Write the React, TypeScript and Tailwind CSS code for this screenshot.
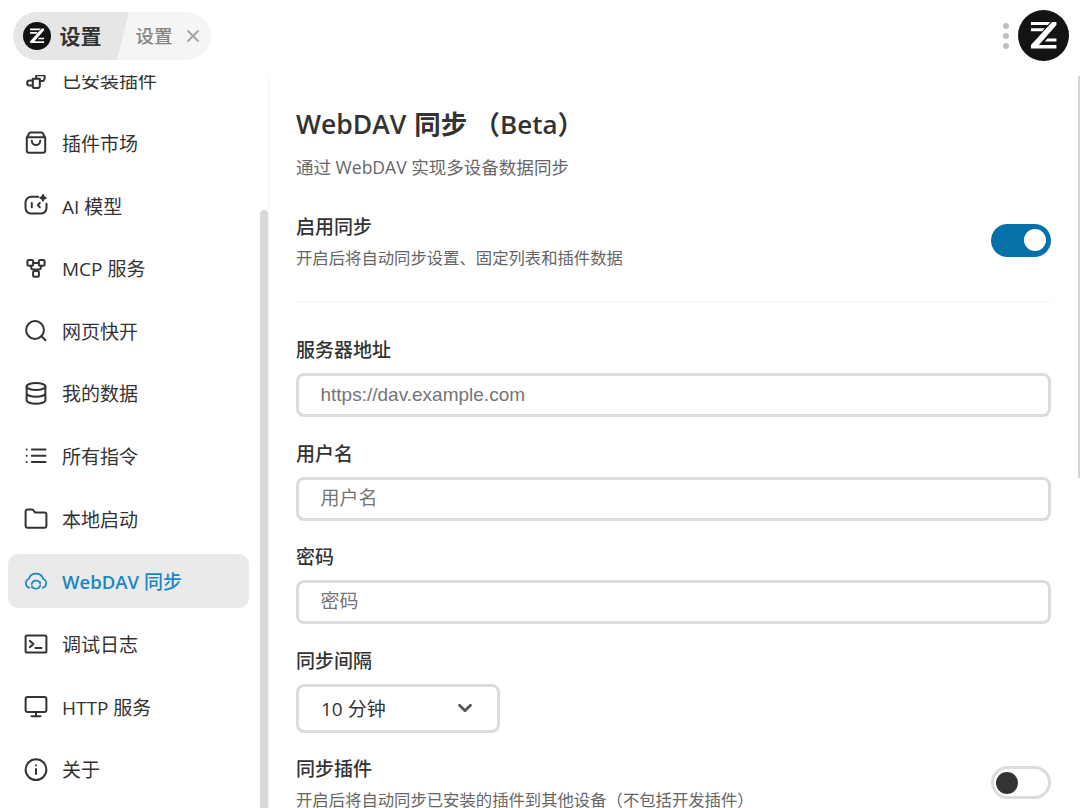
import type { ReactNode } from "react";
import { ChevronDown, X } from "lucide-react";

type IconProps = { children: ReactNode; strokeWidth?: number };

function Icon({ children, strokeWidth = 2 }: IconProps) {
  return (
    <svg
      className="size-6 shrink-0"
      viewBox="0 0 24 24"
      fill="none"
      stroke="currentColor"
      strokeWidth={strokeWidth}
      strokeLinecap="round"
      strokeLinejoin="round"
    >
      {children}
    </svg>
  );
}

function Logo({ className }: { className: string }) {
  return (
    <svg className={className} viewBox="0 0 154 154">
      <circle cx="77" cy="77" r="77" fill="#131313" />
      <g fill="#fff">
        <path d="M39 36h59l-8 9H39z" />
        <path d="M39 55h42l-8 9H39z" />
        <path d="M103 36h13v9L63 106h53v10H39v-10z" />
        <path d="M89 86h27v9H81z" />
      </g>
    </svg>
  );
}

const menu = [
  {
    label: "已安装插件",
    icon: (
      <Icon>
        <path d="M8.8 9.8h7v7.4a1.8 1.8 0 0 1-1.8 1.8h-3.4a1.8 1.8 0 0 1-1.8-1.8z" />
        <path d="M8.8 11.5H5.6a2.5 2.5 0 0 0 0 5h3" />
        <path d="M12.2 9.5V6.2h6.9a1.6 1.6 0 0 1 1.6 1.6v1.3a3 3 0 0 1-3 3h-1.6" />
      </Icon>
    ),
  },
  {
    label: "插件市场",
    icon: (
      <Icon>
        <path d="M2.8 6.6 5.2 2.2c.3-.5.8-.8 1.4-.8h10.8c.6 0 1.1.3 1.4.8l2.4 4.4v13a2.2 2.2 0 0 1-2.2 2.2H5a2.2 2.2 0 0 1-2.2-2.2zM3 6.2h18" />
        <path d="M7.8 9.8a4.2 4.2 0 0 0 8.4 0" />
      </Icon>
    ),
  },
  {
    label: "AI 模型",
    icon: (
      <Icon>
        <path d="M14.2 2.8H7.2A5.7 5.7 0 0 0 1.5 8.5v5.4a5.7 5.7 0 0 0 5.7 5.7h9.6a5.7 5.7 0 0 0 5.7-5.7V9.8" />
        <path d="M7.8 9v4.2M15.8 9l-2 2.1 2 2.1" />
        <path
          d="M19 .5c.5 2 1.2 2.8 3.2 3.3-2 .5-2.7 1.3-3.2 3.3-.5-2-1.2-2.8-3.2-3.3 2-.5 2.7-1.3 3.2-3.3z"
          fill="currentColor"
          strokeWidth="1.2"
        />
      </Icon>
    ),
  },
  {
    label: "MCP 服务",
    icon: (
      <Icon>
        <rect x="3.4" y="3" width="5.8" height="5.8" rx="1.5" />
        <rect x="14.8" y="3" width="5.8" height="5.8" rx="1.5" />
        <rect x="9.1" y="13.9" width="5.8" height="5.8" rx="1.5" />
        <path d="M9.2 5.9h5.6M7.2 8.8v1.6a2 2 0 0 0 2 2h5.6a2 2 0 0 0 2-2V8.8M12 12.4v1.5" />
      </Icon>
    ),
  },
  {
    label: "网页快开",
    icon: (
      <Icon>
        <circle cx="11" cy="11" r="8.9" />
        <path d="m17.5 17.2 4 4" />
      </Icon>
    ),
  },
  {
    label: "我的数据",
    icon: (
      <Icon>
        <ellipse cx="12" cy="4.5" rx="9.4" ry="3.5" />
        <path d="M2.6 4.5v13.7c0 2 4.2 3.5 9.4 3.5s9.4-1.5 9.4-3.5V4.5M2.6 11.3c0 2 4.2 3.5 9.4 3.5s9.4-1.5 9.4-3.5" />
      </Icon>
    ),
  },
  {
    label: "所有指令",
    icon: (
      <Icon>
        <path d="M7.8 5.4H21.5M7.8 11.7H21.5M7.8 18H21.5M2.7 5.4h.01M2.7 11.7h.01M2.7 18h.01" />
      </Icon>
    ),
  },
  {
    label: "本地启动",
    icon: (
      <Icon>
        <path d="M1.6 4.4a2 2 0 0 1 2-2h4.2c.6 0 1.1.3 1.5.7l1.9 2.5h9.2a2 2 0 0 1 2 2v11.2a2 2 0 0 1-2 2H3.6a2 2 0 0 1-2-2z" />
      </Icon>
    ),
  },
  {
    label: "WebDAV 同步",
    active: true,
    icon: (
      <Icon strokeWidth={1.6}>
        <path d="M5.4 17.8a4.6 4.6 0 0 1-.6-8.8 7.5 7.5 0 0 1 14.4 0 4.6 4.6 0 0 1-.6 8.8" />
        <path d="M7.7 14a4.4 4.4 0 0 1 8.4-.6v-1.4M16.3 15.2a4.4 4.4 0 0 1-8.4.8v1.4" />
      </Icon>
    ),
  },
  {
    label: "调试日志",
    icon: (
      <Icon>
        <rect x="1.6" y="3.4" width="20.8" height="17.2" rx="1.6" />
        <path d="m5.8 8.8 3.6 3.2-3.6 3.2M11.5 16h6" />
      </Icon>
    ),
  },
  {
    label: "HTTP 服务",
    icon: (
      <Icon>
        <rect x="1.6" y="2" width="20.8" height="15" rx="2" />
        <path d="M12 17.4v4M7.5 21.2h9" />
      </Icon>
    ),
  },
  {
    label: "关于",
    icon: (
      <Icon>
        <circle cx="12" cy="11.6" r="10.4" />
        <path d="M12 11v5M12 7.2h.01" />
      </Icon>
    ),
  },
];

function Header() {
  return (
    <header className="flex h-[75px] shrink-0 items-start justify-between pt-[10px] pr-[11px] pl-[13px]">
      <div className="mt-[2px] flex h-12 w-[198px] overflow-hidden rounded-full bg-[#f5f5f5]">
        <div className="flex w-[116px] items-center bg-[#e6e6e6] pl-[10px] [clip-path:polygon(0_0,100%_0,calc(100%_-_12px)_100%,0_100%)]">
          <Logo className="size-7 shrink-0" />
          <span className="ml-[8.5px] pt-[2px] text-[21px] font-semibold whitespace-nowrap text-[#333]">设置</span>
        </div>
        <div className="flex items-center pl-[6.5px] text-[#858585]">
          <span className="text-[18.5px] font-medium whitespace-nowrap">设置</span>
          <X className="ml-[10.5px] size-[20px] text-[#a3a3a3]" strokeWidth={2.2} />
        </div>
      </div>
      <div className="flex items-center gap-[9px]">
        <div className="flex flex-col gap-[4px]">
          <i className="size-[6px] rounded-full bg-[#bfbfbf]" />
          <i className="size-[6px] rounded-full bg-[#bfbfbf]" />
          <i className="size-[6px] rounded-full bg-[#bfbfbf]" />
        </div>
        <Logo className="size-[51px]" />
      </div>
    </header>
  );
}

function Sidebar() {
  return (
    <aside className="flex w-[269px] shrink-0 overflow-hidden border-r border-[#f3f3f3]">
      <nav className="-mt-[21.8px] ml-[7.5px] flex w-[241.5px] flex-col gap-[8.64px]">
        {menu.map((item) => (
          <div
            key={item.label}
            className={
              item.active
                ? "flex h-[54px] shrink-0 items-center gap-[14px] rounded-[10px] bg-[#eaeaea] pt-[1px] pl-[16.5px] text-[19px] font-medium text-[#1788c3]"
                : "flex h-[54px] shrink-0 items-center gap-[14px] pt-[1px] pl-[16.5px] text-[19px] text-[#333]"
            }
          >
            {item.icon}
            <span className="pt-[1.6px]">
              {item.active ? (
                <>
                  <span className="text-[18.5px] font-semibold">WebDAV</span> 同步
                </>
              ) : (
                item.label
              )}
            </span>
          </div>
        ))}
      </nav>
      <div className="mt-[135px] ml-[11px] h-[700px] w-2 rounded-t-full bg-[#d8d8d8]" />
    </aside>
  );
}

function Switch({ on }: { on?: boolean }) {
  return on ? (
    <div className="-mt-[2px] flex h-[33px] w-[60px] items-center justify-end rounded-full bg-[#0670a9] pr-[5px]">
      <div className="size-[22px] rounded-full bg-white" />
    </div>
  ) : (
    <div className="-mt-[4px] flex h-[33px] w-[60px] items-center rounded-full border-3 border-[#dcdcdc] pl-[2px]">
      <div className="size-[22px] rounded-full bg-[#333]" />
    </div>
  );
}

function SettingRow({ title, desc, on }: { title: string; desc: string; on?: boolean }) {
  return (
    <div className="flex h-[62px] items-center justify-between">
      <div className={on ? "pt-[4px]" : "pt-[1px]"}>
        <div className="text-[19px] leading-[31px] font-medium text-[#333]">{title}</div>
        <div className="text-[16.35px] leading-[31px] whitespace-nowrap text-[#666]">{desc}</div>
      </div>
      <Switch on={on} />
    </div>
  );
}

function Field({ label, placeholder }: { label: string; placeholder: string }) {
  return (
    <div className="mb-[22.6px]">
      <div className="mb-[8px] text-[19px] leading-[29px] font-medium text-[#333]">{label}</div>
      <input
        placeholder={placeholder}
        className="block h-[44px] w-full rounded-[8px] border-3 border-[#dcdcdc] px-[21.5px] font-['Liberation_Sans','Noto_Sans_CJK_SC',sans-serif] text-[19px] text-[#333] outline-none placeholder:text-[#757575]"
      />
    </div>
  );
}

export default function App() {
  return (
    <div className="flex h-[808px] w-[1080px] flex-col overflow-hidden bg-white font-['Open_Sans','Noto_Sans_CJK_SC',sans-serif]">
      <Header />
      <div className="flex min-h-0 flex-1">
        <Sidebar />
        <main className="min-w-0 flex-1 overflow-hidden pl-[27px]">
          <div className="w-[755px]">
            <h1 className="mt-[31px] text-[26.5px] leading-[36px] font-semibold whitespace-pre text-[#333]">
              WebDAV <span className="ml-px">同步</span> <span className="text-[26px]">（Beta）</span>
            </h1>
            <p className="mt-[11px] text-[17.55px] leading-[28px] text-[#666]">通过 WebDAV 实现多设备数据同步</p>
            <div className="mt-[29px] border-b border-[#f2f2f2] pb-[29px]">
              <SettingRow title="启用同步" desc="开启后将自动同步设置、固定列表和插件数据" on />
            </div>
            <div className="mt-[34px]">
              <Field label="服务器地址" placeholder="https://dav.example.com" />
              <Field label="用户名" placeholder="用户名" />
              <Field label="密码" placeholder="密码" />
            </div>
            <div className="mb-[8px] text-[19px] leading-[29px] font-medium text-[#333]">同步间隔</div>
            <div className="flex h-[49px] w-[204px] items-center justify-between rounded-[8px] border-3 border-[#dcdcdc] pr-[21px] pl-[22px] text-[19px] text-[#333]">
              <span className="pt-[2px]">10 分钟</span>
              <ChevronDown className="size-[22px] text-[#555]" strokeWidth={3} />
            </div>
            <div className="mt-[21px]">
              <SettingRow title="同步插件" desc="开启后将自动同步已安装的插件到其他设备（不包括开发插件）" />
            </div>
          </div>
        </main>
        <div className="mt-px h-[402px] w-[2px] bg-[#d6d6d6]" />
      </div>
    </div>
  );
}
